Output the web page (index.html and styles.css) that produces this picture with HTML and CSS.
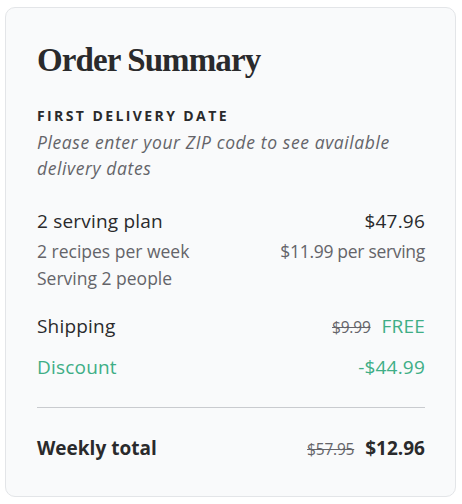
FILE: index.html
```html
<!DOCTYPE html>
<html lang="en">
<head>
<meta charset="utf-8">
<link rel="stylesheet" href="styles.css">
</head>
<body>
<div class="card">
  <h1 class="title">Order Summary</h1>
  <section class="delivery">
    <h2 class="label">FIRST DELIVERY DATE</h2>
    <p class="note">Please enter your ZIP code to see available delivery dates</p>
  </section>
  <section class="plan">
    <div class="row main"><span>2 serving plan</span><span>$47.96</span></div>
    <div class="row sub"><span>2 recipes per week</span><span class="per">$11.99 per serving</span></div>
    <div class="row sub"><span>Serving 2 people</span></div>
  </section>
  <section class="fees">
    <div class="row main"><span>Shipping</span><span class="prices"><s class="old">$9.99</s><span class="green">FREE</span></span></div>
    <div class="row main green"><span>Discount</span><span>-$44.99</span></div>
  </section>
  <hr class="divider">
  <div class="row total"><span>Weekly total</span><span class="prices"><s class="old">$57.95</s><span>$12.96</span></span></div>
</div>
</body>
</html>
```
FILE: styles.css
```css
* { box-sizing: border-box; }
html, body { margin: 0; background: #ffffff; }
body { padding: 7px 6px 7px 5px; font-family: "Open Sans", "Noto Sans", sans-serif; color: #2a2a2c; }
.card {
  background: #f9fafb;
  border: 1px solid #e3e5e8;
  border-radius: 10px;
  padding: 32px 30px 38px 31px;
  height: 490px;
}
.title {
  margin: 0;
  font-family: "Liberation Serif", "DejaVu Serif", serif;
  font-weight: 700;
  font-size: 33px;
  line-height: 40px;
  letter-spacing: -0.9px;
  color: #2a2a2c;
}
.delivery { margin-top: 27px; }
.label {
  margin: 0;
  font-size: 14px;
  font-weight: 700;
  letter-spacing: 2.4px;
  line-height: 18px;
}
.note {
  margin: 4px 0 0;
  font-style: italic;
  font-size: 17.5px;
  letter-spacing: 0.6px;
  line-height: 26px;
  color: #646469;
}
.plan { margin-top: 27px; }
.row { display: flex; justify-content: space-between; align-items: baseline; }
.main { font-size: 19px; line-height: 27px; letter-spacing: 0.2px; }
.sub { font-size: 17.5px; line-height: 27px; color: #646469; }
.main + .sub { margin-top: 3px; }
.per { letter-spacing: -0.3px; }
.fees { margin-top: 21px; display: flex; flex-direction: column; gap: 13px; }
.green { color: #3fae86; }
.prices { display: flex; gap: 11px; align-items: baseline; }
.old { color: #646469; font-size: 15.5px; letter-spacing: -0.2px; }
.divider { border: 0; border-top: 1px solid #c9cbcf; margin: 26px 0 0; }
.total { margin-top: 27px; font-size: 19px; font-weight: 700; line-height: 27px; }
.total .old { font-weight: 400; }
```
